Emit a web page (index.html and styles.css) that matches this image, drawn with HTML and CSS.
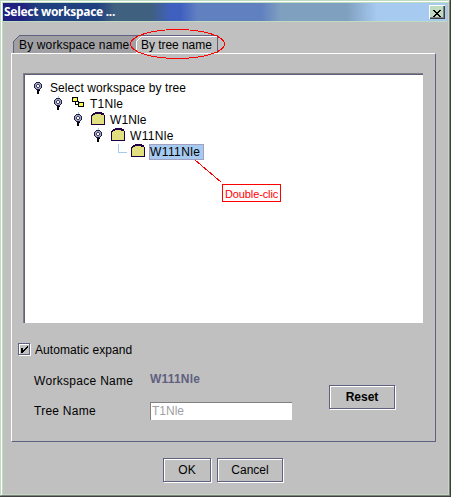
FILE: index.html
```html
<!DOCTYPE html>
<html lang="en">
<head>
<meta charset="utf-8">
<title>Select workspace ...</title>
<link rel="stylesheet" href="styles.css">
</head>
<body>
<svg class="defs" width="0" height="0" shape-rendering="crispEdges">
  <symbol id="handle" viewBox="0 0 9 14">
    <path fill="#a6caf0" d="M4 0h1v2h-1z"/>
    <path fill="#000" d="M3 9h3v2h-1v3h-2z"/>
    <path fill="#202040" d="M2 2h4v1h1v1h1v4h-1v1h-1v1h-4v-1h-1v-1h-1v-4h1v-1h1z"/>
    <path fill="#a0a0c4" d="M2 3h4v1h1v4h-1v1h-4v-1h-1v-4h1z"/>
    <path fill="#404060" d="M3 4h2v1h1v2h-1v1h-2v-1h-1v-2h1z"/>
    <path fill="#fff" d="M3 5h2v2h-2z"/>
  </symbol>
  <symbol id="folder" viewBox="0 0 14 13">
    <path fill="#200040" d="M4 0h7v1h2v2h1v10h-14v-10h1v-1h1v-1h2z"/>
    <path fill="#e0e080" d="M4 2h6v1h3v9h-12v-8h1v-1h2z"/>
  </symbol>
  <symbol id="nodes" viewBox="0 0 12 10">
    <path fill="#000" d="M0 0h6v4h1v1h5v5h-6v-2h-3v-3h-3z"/>
    <path fill="#ffff40" d="M1 1h4v3h-4zM7 6h4v3h-4z"/>
    <path fill="#fff" d="M4 5h2v2h-2z"/>
    <path fill="#c0c0c0" d="M1 1h1v1h-1zM7 6h1v1h-1z"/>
  </symbol>
</svg>
<div class="window">
  <header class="titlebar">
    <h1>Select workspace ...</h1>
    <button class="close" aria-label="Close"><svg width="8" height="7" shape-rendering="crispEdges"><path d="M0 0h2v1h1v1h2v-1h1v-1h2v1h-1v1h-1v1h-1v1h1v1h1v1h1v1h-2v-1h-1v-1h-2v1h-1v1h-2v-1h1v-1h1v-1h1v-1h-1v-1h-1v-1h-1z"/></svg></button>
  </header>
  <main class="content">
    <nav class="tabs">
      <div class="tab first"><svg width="123" height="18" shape-rendering="crispEdges"><path class="tab-fill" d="M0 18V6L6 0H123V18z"/><path class="tab-line" d="M.5 18V6.500L6.500.5H123"/></svg><span class="t-workspace">By workspace name</span></div>
      <div class="tab active"><svg width="82" height="18" shape-rendering="crispEdges"><path class="tab-line" d="M0 .5H81.500V18"/><path class="tab-light" d="M.5 18V6.500L5.500 1.500H81"/></svg><span class="t-tree">By tree name</span>
        <svg class="ring" width="96" height="31" shape-rendering="crispEdges"><ellipse cx="47.500" cy="15" rx="47" ry="14.500"/></svg>
      </div>
    </nav>
    <section class="panel">
      <div class="tree">
        <div class="row r0"><svg class="handle"><use href="#handle"/></svg><span class="s0">Select workspace by tree</span></div>
        <div class="row r1"><svg class="handle"><use href="#handle"/></svg><svg class="nodes"><use href="#nodes"/></svg><span class="s1">T1Nle</span></div>
        <div class="row r2"><svg class="handle"><use href="#handle"/></svg><svg class="folder"><use href="#folder"/></svg><span class="s2">W1Nle</span></div>
        <div class="row r3"><svg class="handle"><use href="#handle"/></svg><svg class="folder"><use href="#folder"/></svg><span class="s3">W11Nle</span></div>
        <div class="row r4"><i class="elbow"></i><svg class="folder"><use href="#folder"/></svg><span class="selected">W111Nle</span></div>
        <svg class="pointer" width="27" height="23" shape-rendering="crispEdges"><path d="M0 0L26 22"/></svg>
        <div class="note"><span>Double-clic</span></div>
      </div>
      <label class="auto"><i class="check"><svg width="7" height="7" shape-rendering="crispEdges"><path d="M6 0h1v2h-1v1h-1v1h-1v1h-1v1h-1v1h-2v-5h2v2h1v-1h1v-1h1v-1h1z"/></svg></i><span class="t-auto">Automatic expand</span></label>
      <div class="form">
        <div class="fields">
          <span class="t-wname">Workspace Name</span><b class="value">W111Nle</b>
          <span class="t-tname">Tree Name</span><div class="input"><span>T1Nle</span></div>
        </div>
        <button class="btn reset"><span>Reset</span></button>
      </div>
    </section>
    <footer class="actions">
      <button class="btn ok"><span>OK</span></button>
      <button class="btn cancel"><span>Cancel</span></button>
    </footer>
  </main>
</div>
</body>
</html>
```
FILE: styles.css
```css
* { box-sizing: border-box; }
body { margin: 0; width: 451px; height: 497px; overflow: hidden; background: #404040; font: 12px/16px "Liberation Sans", Arial, sans-serif; color: #000; }
svg { display: block; flex: none; }
span, b { white-space: nowrap; }
button { font: inherit; padding: 0; border: 0; color: #000; }
.defs { position: absolute; }
.window { width: 450px; height: 496px; background: #c0c0c0; border: 1px solid #c0dcc0; border-right-color: #808080; border-bottom-color: #808080; box-shadow: inset 1px 1px #fff, inset -1px -1px #c0dcc0, inset 2px 2px #c0dcc0; padding: 2px; }
.titlebar { height: 19px; display: flex; align-items: center; justify-content: space-between; padding: 0 2px 0 1px; border-bottom: 1px solid #c0dcc0; background: linear-gradient(90deg, #202080 0 18px, #204080 36px 94px, #406080 112px 148px, #4060c0 168px 178px, #6080c0 194px 258px, #80a0c0 278px 344px, #a6caf0 374px); }
h1 { margin: 0; font: bold 12px/18px "Noto Sans", sans-serif; color: #fff; white-space: nowrap; letter-spacing: -.3px; }
.close { width: 16px; height: 14px; background: #c0dcc0; box-shadow: inset 1px 1px #fff, inset -1px -1px #404040, inset -2px -2px #808080; padding: 3px 0 0 4px; }
.content { padding: 13px 0 0 8px; }
.tabs { display: flex; height: 18px; padding-left: 2px; }
.tab { position: relative; height: 18px; }
.tab > span { position: absolute; top: 2px; left: 6px; letter-spacing: .14px; }
.tab.active > span { left: 5px; letter-spacing: -.05px; }
.tab-fill { fill: #a0a0a4; }
.tab-line { fill: none; stroke: #606080; }
.tab-light { fill: none; stroke: #fff; }
.tab .ring { position: absolute; left: -6px; top: -6px; z-index: 2; fill: none; stroke: #f00; }
.panel { width: 425px; height: 389px; border: 1px solid #606080; border-top-color: #fff; border-left-color: #fff; padding: 19px 0 0 11px; }
.tree { position: relative; width: 400px; height: 250px; background: #fff; border-top: 1px solid #808080; border-left: 1px solid #808080; box-shadow: inset 1px 1px #606080; padding-top: 6px; }
.row { display: flex; height: 16px; align-items: flex-start; }
.r0 { padding-left: 10px; } .r1 { padding-left: 30px; } .r2 { padding-left: 50px; } .r3 { padding-left: 70px; } .r4 { padding-left: 94px; }
.handle { width: 9px; height: 14px; }
.r0 .handle { clip-path: inset(2px 0 0); }
.nodes { width: 12px; height: 10px; margin: 1px 0 0 9px; }
.folder { width: 14px; height: 13px; margin: 0 0 0 8px; }
.row span { margin-left: 4px; }
.row .s0 { margin-left: 7px; letter-spacing: .08px; }
.row .s1 { margin-left: 6px; letter-spacing: .25px; }
.row .s2, .row .s3 { margin-left: 5px; letter-spacing: .1px; }
.row .s3 { letter-spacing: .35px; }
.elbow { width: 9px; height: 9px; border: solid #a6caf0; border-width: 0 0 1px 1px; }
.r4 .folder { margin-left: 4px; }
.row .selected { width: 55px; height: 16px; line-height: 15px; background: #a6caf0; border: 1px solid #a0a0c0; margin-left: 4px; letter-spacing: .4px; }
.pointer { position: absolute; left: 171px; top: 86px; fill: none; stroke: #f00; }
.note { position: absolute; left: 198px; top: 110px; width: 59px; height: 18px; border: 1px solid #f00; color: #f00; font-size: 11px; line-height: 18px; padding-left: 2px; letter-spacing: -.12px; }
.auto { display: flex; align-items: center; height: 16px; margin: 19px 0 0 -5px; }
.check { width: 12px; height: 12px; margin-top: -2px; border: 1px solid #606080; box-shadow: 1px 1px #fff, inset 1px 1px #fff; padding: 2px 0 0 2px; }
.t-auto { margin-left: 5px; letter-spacing: .08px; }
.form { display: flex; margin: 14px 0 0 11px; }
.fields { display: grid; grid-template-columns: 116px 142px; grid-template-rows: 30px 18px; width: 295px; }
.t-wname { letter-spacing: .3px; padding-top: 1px; }
.value { color: #606080; margin-top: -1px; letter-spacing: .2px; }
.t-tname { padding-top: 1px; letter-spacing: .25px; }
.input { height: 18px; background: #fff; border-top: 1px solid #808080; border-left: 1px solid #808080; color: #a0a0a4; line-height: 17px; padding-left: 1px; }
.btn { height: 24px; background: #c0c0c0; border: 1px solid #606080; box-shadow: 1px 1px #fff, inset 1px 1px #fff; line-height: 22px; text-align: center; }
.reset { width: 66px; margin-top: 13px; font-weight: bold; }
.actions { display: flex; gap: 6px; padding: 16px 0 0 152px; }
.ok { width: 48px; } .cancel { width: 66px; }
```
